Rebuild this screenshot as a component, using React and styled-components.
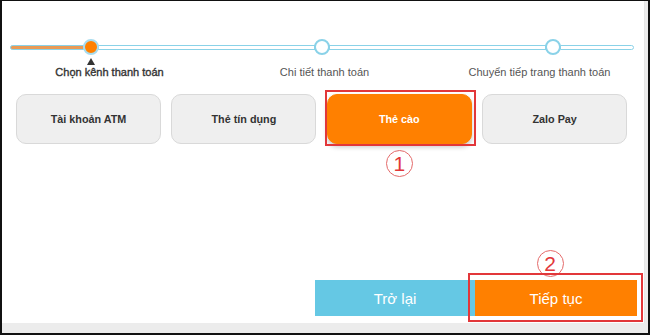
import React from 'react';
import styled, { createGlobalStyle } from 'styled-components';

const GlobalStyle = createGlobalStyle`
  body {
    margin: 0;
    font-family: "Liberation Sans", Arial, sans-serif;
  }
`;

const Frame = styled.div`
  width: 650px;
  height: 335px;
  box-sizing: border-box;
  border-style: solid;
  border-color: #111;
  border-width: 1px 2px 2px 2px;
  background: #ececec;
  display: flex;
  flex-direction: column;
`;

const Panel = styled.div`
  height: 322px;
  margin-right: 3px;
  background: #fff;
  border-right: 1px solid #e6e6e6;
  display: flex;
  flex-direction: column;
`;

const Track = styled.div`
  display: flex;
  align-items: center;
  width: 622px;
  margin: 38px 0 0 9px;
`;

const Segment = styled.div`
  flex: ${(p) => p.size};
  height: 3px;
  border: 1.5px solid #8ad2e8;
  background: ${(p) => (p.done ? '#e99a55' : '#fff')};
  border-radius: ${(p) => p.round || '0'};
  margin: 0 -1px;
`;

const Dot = styled.div`
  width: 16px;
  height: 16px;
  box-sizing: border-box;
  border-radius: 50%;
  border: 2px solid ${(p) => (p.active ? '#a8dcee' : '#8ad2e8')};
  background: ${(p) => (p.active ? '#ff8000' : '#fff')};
  position: relative;
  z-index: 1;
`;

const Pointer = styled.div`
  width: 0;
  height: 0;
  margin: 3px 0 0 85px;
  border-left: 4px solid transparent;
  border-right: 4px solid transparent;
  border-bottom: 7px solid #333;
`;

const Labels = styled.div`
  display: grid;
  grid-template-columns: repeat(3, 215px);
  margin-top: 1px;
`;

const Label = styled.div`
  text-align: center;
  font-size: 11px;
  line-height: 13px;
  color: ${(p) => (p.active ? '#333' : '#555')};
  -webkit-text-stroke: ${(p) => (p.active ? '0.35px #333' : '0')};
`;

const Methods = styled.div`
  display: grid;
  grid-template-columns: repeat(4, 145px);
  column-gap: 10.4px;
  margin: 15px 0 0 14px;
`;

const MethodCell = styled.div`
  display: flex;
  flex-direction: column;
  align-items: center;
`;

const Method = styled.button`
  position: relative;
  width: 145px;
  height: 50px;
  box-sizing: border-box;
  border-radius: 10px;
  border: 1px solid ${(p) => (p.selected ? '#ff8000' : '#d9d9d9')};
  background: ${(p) => (p.selected ? '#ff8000' : '#efefef')};
  color: ${(p) => (p.selected ? '#fff' : '#333')};
  box-shadow: ${(p) => (p.selected ? '0 3px 5px rgba(0,0,0,0.22)' : 'none')};
  font-family: "Liberation Sans", Arial, sans-serif;
  font-size: 10.8px;
  font-weight: 700;
  padding: 0;

  ${(p) =>
    p.selected &&
    `
    &::after {
      content: '';
      position: absolute;
      top: -5px;
      left: -3px;
      right: -5px;
      bottom: -3px;
      border: 2px solid #e2373a;
    }
  `}
`;

const Marker = styled.span`
  width: 27px;
  height: 27px;
  box-sizing: border-box;
  border-radius: 50%;
  border: 1px solid #e46a6a;
  color: #e2373a;
  font-family: "Liberation Sans", Arial, sans-serif;
  font-size: 21px;
  line-height: 26px;
  text-align: center;
  margin-top: ${(p) => p.top || '0'};
  margin-right: ${(p) => p.shift || '0'};
  margin-bottom: ${(p) => p.bottom || '0'};
`;

const Footer = styled.div`
  margin-top: auto;
  display: flex;
  justify-content: flex-end;
  align-items: flex-end;
  padding: 0 7px 7px 0;
`;

const NextCell = styled.div`
  display: flex;
  flex-direction: column;
  align-items: center;
`;

const ActionButton = styled.button`
  position: relative;
  height: 36px;
  width: ${(p) => p.w};
  border: none;
  background: ${(p) => p.bg};
  color: #fff;
  font-family: "Liberation Sans", Arial, sans-serif;
  font-size: 15px;
  padding: 0;

  ${(p) =>
    p.marked &&
    `
    &::after {
      content: '';
      position: absolute;
      top: -7px;
      left: -7px;
      right: -6px;
      bottom: -6px;
      border: 2px solid #e2373a;
    }
  `}
`;

const methods = ['Tài khoản ATM', 'Thẻ tín dụng', 'Thẻ cào', 'Zalo Pay'];

const App = () => (
  <Frame>
    <GlobalStyle />
    <Panel>
      <Track>
        <Segment size={72} done round="3px 0 0 3px" />
        <Dot active />
        <Segment size={215} />
        <Dot />
        <Segment size={215} />
        <Dot />
        <Segment size={72} round="0 3px 3px 0" />
      </Track>
      <Pointer />
      <Labels>
        <Label active>Chọn kênh thanh toán</Label>
        <Label>Chi tiết thanh toán</Label>
        <Label>Chuyển tiếp trang thanh toán</Label>
      </Labels>
      <Methods>
        {methods.map((m) => (
          <MethodCell key={m}>
            <Method selected={m === 'Thẻ cào'}>{m}</Method>
            {m === 'Thẻ cào' && <Marker top="6px">1</Marker>}
          </MethodCell>
        ))}
      </Methods>
      <Footer>
        <ActionButton w="160px" bg="#65c8e4">Trở lại</ActionButton>
        <NextCell>
          <Marker shift="12px" bottom="3px">2</Marker>
          <ActionButton w="162px" bg="#ff8000" marked>Tiếp tục</ActionButton>
        </NextCell>
      </Footer>
    </Panel>
  </Frame>
);

export default App;
